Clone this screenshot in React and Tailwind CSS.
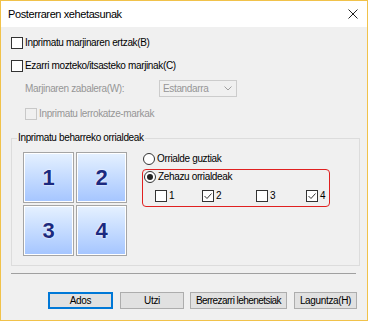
const Check = ({ checked = false, disabled = false }) => (
  <span
    className={
      "w-[12px] h-[12px] shrink-0 border flex items-center justify-center " +
      (disabled ? "border-[#c8c8c8] bg-[#f0f0f0]" : "border-[#333333] bg-white")
    }
  >
    {checked && (
      <svg width="10" height="10" viewBox="0 0 10 10">
        <path d="M1.5 5 L4 7.5 L8.5 2.5" fill="none" stroke="#333" strokeWidth="1" />
      </svg>
    )}
  </span>
);

const Radio = ({ checked = false }) => (
  <span className="w-[12px] h-[12px] shrink-0 rounded-full border border-[#333333] bg-white flex items-center justify-center">
    {checked && <span className="w-[6px] h-[6px] rounded-full bg-[#222]" />}
  </span>
);

const Tile = ({ n }) => (
  <div className="w-[51px] h-[51px] border border-[#a5a5a5] p-[1px] bg-white">
    <div className="w-full h-full bg-gradient-to-b from-[#e4f0ff] to-[#a6c6ff] flex items-center justify-center">
      <span className="text-[22px] font-bold text-[#1b2a80] leading-none [text-shadow:0_0_2px_#fff,0_0_1px_#fff]">
        {n}
      </span>
    </div>
  </div>
);

const Btn = ({ children, primary = false, w, t = "tracking-[-0.35px]" }) => (
  <div
    className={
      "h-[17px] flex items-center justify-center bg-[#e1e1e1] text-[10px] text-black " +
      t +
      " " +
      (primary ? "border-2 border-[#0078d7] " : "border border-[#adadad] ") +
      w
    }
  >
    {children}
  </div>
);

export default function App() {
  return (
    <div className="w-[368px] h-[321px] border border-[#f1c24a] bg-[#f0f0f0] flex flex-col font-['Liberation_Sans',Arial,sans-serif] text-[10px] tracking-[-0.35px] text-black leading-none">
      {/* Title bar */}
      <div className="h-[26px] bg-white flex items-center justify-between pl-[7px] pr-[9px]">
        <span className="text-[11px] tracking-[-0.4px] text-black">Posterraren xehetasunak</span>
        <svg width="10" height="10" viewBox="0 0 10 10">
          <path d="M0.5 0.5 L9.5 9.5 M9.5 0.5 L0.5 9.5" stroke="#222" strokeWidth="1" />
        </svg>
      </div>

      {/* Body */}
      <div className="flex flex-col pl-[10px]">
        <div className="mt-[10px] h-[12px] flex items-center gap-[2px]">
          <Check />
          <span>Inprimatu marjinaren ertzak(B)</span>
        </div>
        <div className="mt-[11px] h-[12px] flex items-center gap-[2px]">
          <Check />
          <span>Ezarri mozteko/itsasteko marjinak(C)</span>
        </div>
        <div className="mt-[8px] h-[17px] flex items-center pl-[14px]">
          <span className="w-[134px] text-[#969696]">Marjinaren zabalera(W):</span>
          <div className="w-[78px] h-[17px] border border-[#cccccc] bg-[#f0f0f0] flex items-center justify-between pl-[3px] pr-[4px]">
            <span className="text-[#969696]">Estandarra</span>
            <svg width="8" height="5" viewBox="0 0 8 5">
              <path d="M0.5 0.5 L4 4 L7.5 0.5" fill="none" stroke="#a0a0a0" strokeWidth="1" />
            </svg>
          </div>
        </div>
        <div className="mt-[11px] h-[12px] flex items-center gap-[2px] pl-[14px]">
          <Check disabled />
          <span className="text-[#969696]">Inprimatu lerrokatze-markak</span>
        </div>

        {/* Group box */}
        <div className="relative mt-[18px] w-[349px] h-[128px] border border-[#dcdcdc] flex">
          <span className="absolute left-[5px] top-[-6px] bg-[#f0f0f0] px-[1px]">
            Inprimatu beharreko orrialdeak
          </span>
          <div className="ml-[11px] mt-[13px] grid grid-cols-2 gap-[2px] self-start">
            <Tile n="1" />
            <Tile n="2" />
            <Tile n="3" />
            <Tile n="4" />
          </div>
          <div className="ml-[15px] mt-[14px] flex flex-col">
            <div className="h-[12px] flex items-center gap-[2px] ml-[1px]">
              <Radio />
              <span>Orrialde guztiak</span>
            </div>
            <div className="mt-[4px] w-[188px] h-[38px] border-[1.5px] border-[#e02020] rounded-[4px] flex flex-col">
              <div className="mt-[1px] h-[12px] flex items-center gap-[2px] ml-[1px]">
                <Radio checked />
                <span>Zehazu orrialdeak</span>
              </div>
              <div className="mt-[7px] h-[12px] flex items-center ml-[12px]">
                <div className="w-[47px] flex items-center gap-[2px]">
                  <Check />
                  <span>1</span>
                </div>
                <div className="w-[54px] flex items-center gap-[2px]">
                  <Check checked />
                  <span>2</span>
                </div>
                <div className="w-[50px] flex items-center gap-[2px]">
                  <Check />
                  <span>3</span>
                </div>
                <div className="flex items-center gap-[2px]">
                  <Check checked />
                  <span>4</span>
                </div>
              </div>
            </div>
          </div>
        </div>

        {/* Separator */}
        <div className="mt-[7px] w-[345px] h-px bg-[#a0a0a0]" />

        {/* Buttons */}
        <div className="mt-[18px] flex items-center">
          <div className="ml-[37px]">
            <Btn primary w="w-[65px]">Ados</Btn>
          </div>
          <div className="ml-[7px]">
            <Btn w="w-[64px]">Utzi</Btn>
          </div>
          <div className="ml-[6px]">
            <Btn w="w-[97px]" t="tracking-[-0.55px]">Berrezarri lehenetsiak</Btn>
          </div>
          <div className="ml-[7px]">
            <Btn w="w-[63px]">Laguntza(H)</Btn>
          </div>
        </div>
      </div>
    </div>
  );
}
